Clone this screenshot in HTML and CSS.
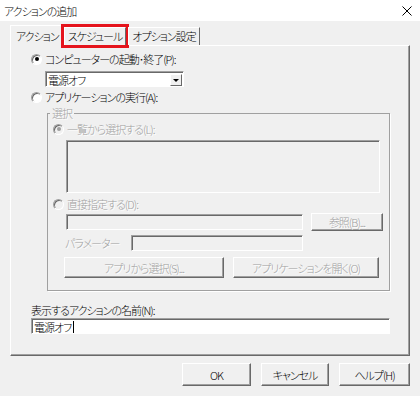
FILE: index.html
```html
<!DOCTYPE html>
<html lang="ja">
<head>
    <meta charset="UTF-8">
    <title>アクションの追加</title>
    <link rel="stylesheet" href="styles.css">
</head>
<body>
    <div class="titlebar">
        <span class="title">アクションの追加</span>
        <svg class="close" width="10" height="10" viewBox="0 0 10 10">
            <path d="M0.5 0.5 L9.5 9.5 M9.5 0.5 L0.5 9.5" stroke="#000" stroke-width="1" fill="none"/>
        </svg>
    </div>

    <div class="dialog">
        <div class="tabs">
            <div class="tab active">アクション</div>
            <div class="tab marked">スケジュール</div>
            <div class="tab">オプション設定</div>
        </div>

        <div class="panel">
            <div class="opt"><span class="radio checked"></span>コンピューターの起動･終了(P):</div>
            <div class="select">
                <span class="select-text">電源オフ</span>
                <span class="arrow"></span>
            </div>
            <div class="opt"><span class="radio"></span>アプリケーションの実行(A):</div>

            <fieldset class="group">
                <legend>選択</legend>
                <div class="opt dis"><span class="radio checked"></span>一覧から選択する(L):</div>
                <div class="field off listbox"></div>
                <div class="opt dis direct"><span class="radio"></span>直接指定する(D):</div>
                <div class="path-row">
                    <div class="field off path"></div>
                    <button class="btn ref" disabled>参照(B)...</button>
                </div>
                <div class="param-row">
                    <span class="param-label">パラメーター</span>
                    <div class="field off param"></div>
                </div>
                <div class="app-row">
                    <button class="btn pick" disabled>アプリから選択(S)...</button>
                    <button class="btn open" disabled>アプリケーションを開く(O)</button>
                </div>
            </fieldset>

            <div class="name-label">表示するアクションの名前(N):</div>
            <div class="field name">電源オフ<span class="caret"></span></div>
        </div>

        <div class="footer">
            <button class="btn ok">OK</button>
            <button class="btn cancel">キャンセル</button>
            <button class="btn help">ヘルプ(H)</button>
        </div>
    </div>
</body>
</html>
```

FILE: styles.css
```css
*{
    margin: 0;
    padding: 0;
    box-sizing: border-box;
}
body{
    width: 420px;
    height: 396px;
    background-color: #f0f0f0;
    font-family: "Noto Sans CJK JP", "Noto Sans", sans-serif;
    font-size: 11px;
    font-weight: 300;
    line-height: 14px;
    letter-spacing: -1px;
    font-feature-settings: "palt";
    color: #000;
    overflow: hidden;
}
.titlebar{
    height: 21px;
    background-color: #fff;
    display: flex;
    align-items: center;
    justify-content: space-between;
    padding: 0 8px 0 4px;
}
.dialog{
    padding: 4px 0 0 10px;
}

/* tabs */
.tabs{
    display: flex;
    align-items: flex-end;
    height: 20px;
    position: relative;
    z-index: 1;
}
.tab{
    height: 18px;
    padding: 0 3px 0 3px;
    line-height: 16px;
    white-space: nowrap;
    border-top: 1px solid #fff;
    border-left: 1px solid #fff;
    border-right: 1px solid #696969;
}
.tab.active{
    height: 21px;
    margin-bottom: -1px;
    background-color: #f0f0f0;
    padding: 2px 3px 0 5px;
}
.tab.marked{
    margin-left: 1px;
    outline: 3px solid #e5141c;
    outline-offset: 0;
}
.tab.marked + .tab{
    margin-left: 2px;
}

/* panel */
.panel{
    width: 400px;
    height: 311px;
    border-top: 1px solid #fff;
    border-left: 1px solid #fff;
    border-right: 1px solid #696969;
    border-bottom: 1px solid #696969;
    box-shadow: inset -1px -1px #a0a0a0;
    padding: 6px 0 0 20px;
}
.opt{
    display: flex;
    align-items: center;
    height: 14px;
    white-space: nowrap;
}
.opt + .select{
    margin-top: 5px;
}
.select + .opt{
    margin-top: 3px;
}
.radio{
    width: 11px;
    height: 11px;
    margin-right: 3px;
    border-radius: 50%;
    border: 1px solid;
    border-color: #a0a0a0 #fff #fff #a0a0a0;
    box-shadow: inset 1px 1px #696969;
    background-color: #fff;
    display: flex;
    align-items: center;
    justify-content: center;
}
.radio.checked::after{
    content: "";
    width: 4px;
    height: 4px;
    border-radius: 50%;
    background-color: #000;
}
.dis{
    color: #a0a0a0;
    text-shadow: 1px 1px #fff;
}
.dis .radio{
    background-color: #f0f0f0;
}
.dis .radio.checked::after{
    background-color: #a0a0a0;
}

.select{
    width: 139px;
    height: 16px;
    margin-left: 14px;
    background-color: #fff;
    border: 1px solid;
    border-color: #a0a0a0 #fff #fff #a0a0a0;
    box-shadow: inset 1px 1px #696969;
    display: flex;
    align-items: center;
    justify-content: space-between;
    padding: 1px 1px 0 2px;
}
.arrow{
    width: 12px;
    height: 12px;
    background-color: #f0f0f0;
    border: 1px solid;
    border-color: #fff #696969 #696969 #fff;
    display: flex;
    align-items: center;
    justify-content: center;
}
.arrow::after{
    content: "";
    border-left: 3px solid transparent;
    border-right: 3px solid transparent;
    border-top: 3px solid #000;
    margin-top: 1px;
}

/* group box */
.group{
    width: 343px;
    margin: 2px 0 0 16px;
    border: 1px solid #a0a0a0;
    box-shadow: 1px 1px #fff;
    padding: 2px 0 12px 5px;
}
.group legend{
    margin-left: -3px;
    padding: 0 2px;
    color: #a0a0a0;
    text-shadow: 1px 1px #fff;
    line-height: 14px;
}
.field{
    border: 1px solid;
    border-color: #a0a0a0 #fff #fff #a0a0a0;
    box-shadow: inset 1px 1px #696969;
    background-color: #fff;
}
.field.off{
    background-color: #f0f0f0;
}
.listbox{
    width: 314px;
    height: 53px;
    margin: 4px 0 0 13px;
}
.direct{
    margin-top: 4px;
}
.path-row{
    display: flex;
    align-items: center;
    height: 18px;
    margin: 2px 0 0 13px;
}
.path{
    width: 237px;
    height: 16px;
}
.btn{
    font-family: inherit;
    font-size: 11px;
    font-weight: 300;
    line-height: 14px;
    letter-spacing: -1px;
    font-feature-settings: "palt";
    white-space: nowrap;
    color: #000;
    background-color: #f0f0f0;
    border: 1px solid;
    border-color: #fff #696969 #696969 #fff;
    box-shadow: inset -1px -1px #a0a0a0;
}
.btn:disabled{
    color: #a0a0a0;
    text-shadow: 1px 1px #fff;
}
.ref{
    width: 72px;
    height: 18px;
    margin-left: 8px;
}
.param-row{
    display: flex;
    align-items: center;
    height: 16px;
    margin: 4px 0 0 12px;
}
.param-label{
    width: 66px;
    color: #a0a0a0;
    text-shadow: 1px 1px #fff;
}
.param{
    width: 172px;
    height: 16px;
}
.app-row{
    display: flex;
    gap: 9px;
    margin: 6px 0 0 11px;
}
.pick{
    width: 160px;
    height: 21px;
}
.open{
    width: 146px;
    height: 21px;
}

.name-label{
    margin-top: 12px;
    height: 14px;
}
.name{
    width: 359px;
    height: 16px;
    margin-top: 1px;
    padding: 1px 0 0 2px;
    display: flex;
    align-items: center;
}
.caret{
    width: 1px;
    height: 12px;
    margin-left: 2px;
    background-color: #000;
}

/* bottom buttons */
.footer{
    display: flex;
    justify-content: flex-end;
    gap: 10px;
    margin-top: 7px;
    padding-right: 10px;
}
.ok{
    width: 69px;
    height: 23px;
}
.cancel{
    width: 68px;
    height: 23px;
}
.help{
    width: 71px;
    height: 23px;
}
```
